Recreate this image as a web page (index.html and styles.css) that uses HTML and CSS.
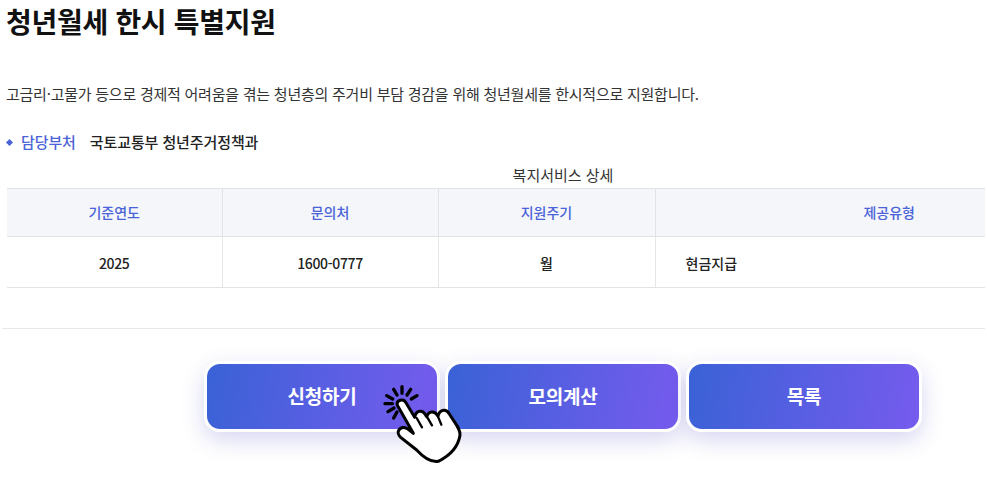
FILE: index.html
```html
<!DOCTYPE html>
<html lang="ko">
  <head>
    <meta charset="UTF-8" />
    <title>청년월세 한시 특별지원</title>
    <link rel="stylesheet" href="styles.css">
  </head>
  <body>
    <main class="page">
      <section class="summary">
        <h1 class="summary__title">청년월세 한시 특별지원</h1>
        <p class="summary__desc">고금리·고물가 등으로 경제적 어려움을 겪는 청년층의 주거비 부담 경감을 위해 청년월세를 한시적으로 지원합니다.</p>
        <div class="summary__dept">
          <span class="summary__label">담당부처</span>
          <span class="summary__value">국토교통부 청년주거정책과</span>
        </div>
      </section>

      <table class="detail">
        <caption class="detail__caption">복지서비스 상세</caption>
        <thead>
          <tr>
            <th>기준연도</th>
            <th>문의처</th>
            <th>지원주기</th>
            <th class="detail__type-head">제공유형</th>
          </tr>
        </thead>
        <tbody>
          <tr>
            <td class="detail__num">2025</td>
            <td class="detail__num">1600-0777</td>
            <td>월</td>
            <td class="detail__type">현금지급</td>
          </tr>
        </tbody>
      </table>

      <div class="actions">
        <a class="actions__btn" href="#">신청하기</a>
        <a class="actions__btn" href="#">모의계산</a>
        <a class="actions__btn" href="#">목록</a>
        <svg class="actions__hand" viewBox="0 0 330 300" width="110" height="100" aria-hidden="true">
          <path d="M96 50V70M71 58L81 75M122 58L111 75M50 77L68 87M141 77L124 87M45 101H67M54 125L72 114M71 144L81 126" stroke="#000" stroke-width="10" stroke-linecap="round" fill="none" />
          <path d="M82 106C78 90 100 84 108 98L134 142C138 120 158 118 166 134L170 140C176 122 194 122 202 136L204 138C210 116 230 116 238 132C254 158 272 176 270 196C264 232 238 258 205 274C180 278 160 262 140 240L92 202C74 186 92 164 112 176L130 190Z" fill="#fff" stroke="#000" stroke-width="9" stroke-linejoin="round" />
          <path d="M140 144L156 172M172 142L186 166M204 140L214 164" stroke="#000" stroke-width="7" stroke-linecap="round" fill="none" />
        </svg>
      </div>
    </main>
  </body>
</html>
```

FILE: styles.css
```css
* {
  box-sizing: border-box;
  margin: 0;
  padding: 0;
}
body {
  font-family: "Noto Sans CJK KR", "Noto Sans", sans-serif;
  color: #222;
  background: #fff;
}
.page {
  padding: 0 2px;
}
.summary {
  padding-left: 4px;
}
.summary__title {
  font-size: 28px;
  line-height: 42px;
  font-weight: 700;
  letter-spacing: -0.3px;
  color: #111;
}
.summary__desc {
  margin-top: 41px;
  font-size: 15px;
  line-height: 22px;
  letter-spacing: -0.24px;
  color: #333;
}
.summary__dept {
  display: flex;
  align-items: center;
  gap: 14px;
  margin-top: 26px;
  font-size: 15px;
  line-height: 22px;
  font-weight: 500;
  letter-spacing: -0.1px;
}
.summary__label {
  color: #4a63d8;
  padding-left: 15px;
  position: relative;
}
.summary__label::before {
  content: "";
  position: absolute;
  left: 1px;
  top: 9px;
  width: 5px;
  height: 5px;
  background: #4a63d8;
  transform: rotate(45deg);
}
.detail {
  width: 978px;
  margin: 0 0 40px 5px;
  border-collapse: collapse;
  table-layout: fixed;
}
.detail__caption {
  font-size: 15px;
  line-height: 22px;
  padding: 11px 0 2px 134px;
  color: #333;
}
.detail th,
.detail td {
  font-size: 14px;
  text-align: center;
  font-weight: 500;
}
.detail th {
  height: 48px;
  padding-bottom: 1px;
  background: #f4f6fa;
  color: #4a63d8;
  border-top: 1px solid #e2e3e6;
  border-bottom: 1px solid #e2e3e6;
  border-left: 1px solid #e2e3e6;
}
.detail td {
  height: 51px;
  padding-top: 2px;
  border-bottom: 1px solid #e2e3e6;
  border-left: 1px solid #e6e6e8;
}
.detail th:first-child,
.detail td:first-child {
  border-left: 0;
}
.detail th:nth-child(1) {
  width: 215px;
}
.detail th:nth-child(2) {
  width: 216px;
}
.detail th:nth-child(3) {
  width: 217px;
}
.detail .detail__num {
  letter-spacing: -0.35px;
}
.detail .detail__type-head {
  padding-left: 138px;
}
.detail .detail__type {
  text-align: left;
  padding-left: 30px;
}
.actions {
  position: relative;
  display: flex;
  justify-content: flex-start;
  gap: 5px;
  border-top: 1px solid #e8e8e8;
  padding: 32px 0 47px 202px;
}
.actions__btn {
  display: flex;
  align-items: center;
  justify-content: center;
  width: 236px;
  height: 71px;
  padding-bottom: 2px;
  border: 3px solid #fff;
  border-radius: 16px;
  background: linear-gradient(100deg, #3a62d6 0%, #765bee 100%);
  box-shadow: 0 8px 22px rgba(70, 70, 190, 0.22);
  color: #fff;
  font-size: 19px;
  font-weight: 700;
  letter-spacing: -0.2px;
  text-decoration: none;
}
.actions__hand {
  position: absolute;
  left: 368px;
  top: 41px;
}
```
